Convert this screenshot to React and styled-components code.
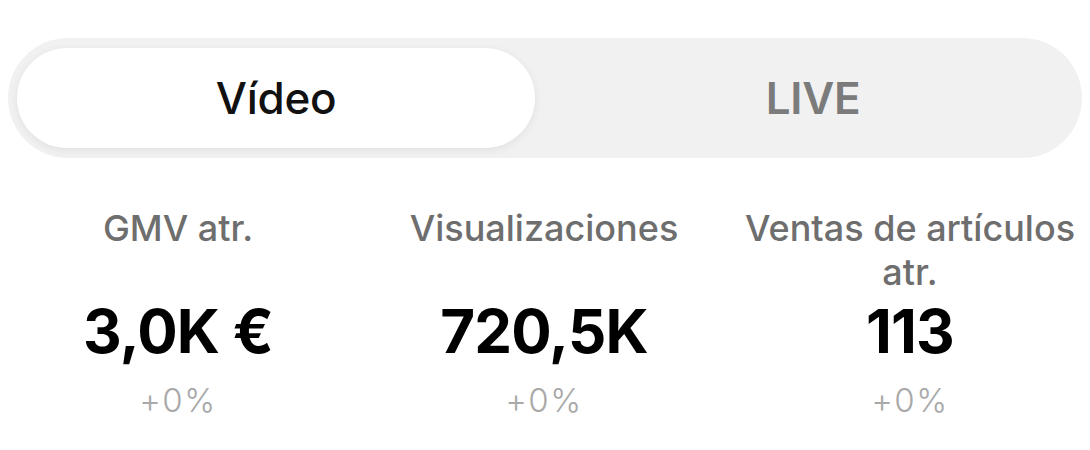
import React, { useState } from "react";
import styled, { createGlobalStyle } from "styled-components";

const GlobalStyle = createGlobalStyle`
  html, body {
    margin: 0;
    padding: 0;
    background: #ffffff;
    font-family: "Inter", "Liberation Sans", Arial, sans-serif;
  }
`;

const tabs = ["Vídeo", "LIVE"];

const stats = [
  { label: "GMV atr.", value: "3,0K €", change: "+0%" },
  { label: "Visualizaciones", value: "720,5K", change: "+0%" },
  { label: "Ventas de artículos atr.", value: "113", change: "+0%" },
];

const App = () => {
  const [active, setActive] = useState(0);

  return (
    <Page>
      <GlobalStyle />
      <Segmented>
        {tabs.map((tab, idx) => (
          <Tab key={tab} active={idx === active} onClick={() => setActive(idx)}>
            {tab}
          </Tab>
        ))}
      </Segmented>
      <Stats>
        {stats.map((s) => (
          <Stat key={s.label}>
            <Label>{s.label}</Label>
            <Value>{s.value}</Value>
            <Change>{s.change}</Change>
          </Stat>
        ))}
      </Stats>
    </Page>
  );
};

export default App;

const Page = styled.div`
  width: 1090px;
  height: 450px;
  padding-top: 38px;
  box-sizing: border-box;
  overflow: hidden;
`;

const Segmented = styled.div`
  margin: 0 8px;
  height: 120px;
  box-sizing: border-box;
  padding: 10px 9px;
  border-radius: 60px;
  background: #f1f1f1;
  display: grid;
  grid-template-columns: 518px 1fr;
  column-gap: 18px;
`;

const Tab = styled.div`
  display: flex;
  align-items: center;
  justify-content: center;
  border-radius: 52px;
  cursor: pointer;
  font-size: 44px;
  font-weight: ${(p) => (p.active ? 500 : 600)};
  letter-spacing: -0.3px;
  color: ${(p) => (p.active ? "#111111" : "#7b7b7b")};
  background: ${(p) => (p.active ? "#ffffff" : "transparent")};
  box-shadow: ${(p) => (p.active ? "0 2px 8px rgba(0, 0, 0, 0.07)" : "none")};
`;

const Stats = styled.div`
  margin-top: 48px;
  display: grid;
  grid-template-columns: repeat(3, 356px);
  column-gap: 10px;
`;

const Stat = styled.div`
  display: flex;
  flex-direction: column;
  align-items: center;
  text-align: center;
`;

const Label = styled.div`
  height: 88px;
  font-size: 36px;
  line-height: 44px;
  color: #6e6e6e;
  font-weight: 500;
`;

const Value = styled.div`
  font-size: 60px;
  line-height: 74px;
  font-weight: 700;
  color: #000000;
  letter-spacing: -0.8px;
`;

const Change = styled.div`
  margin-top: 12px;
  font-size: 33px;
  line-height: 40px;
  font-weight: 300;
  color: #a9a9a9;
  letter-spacing: 1.5px;
`;
